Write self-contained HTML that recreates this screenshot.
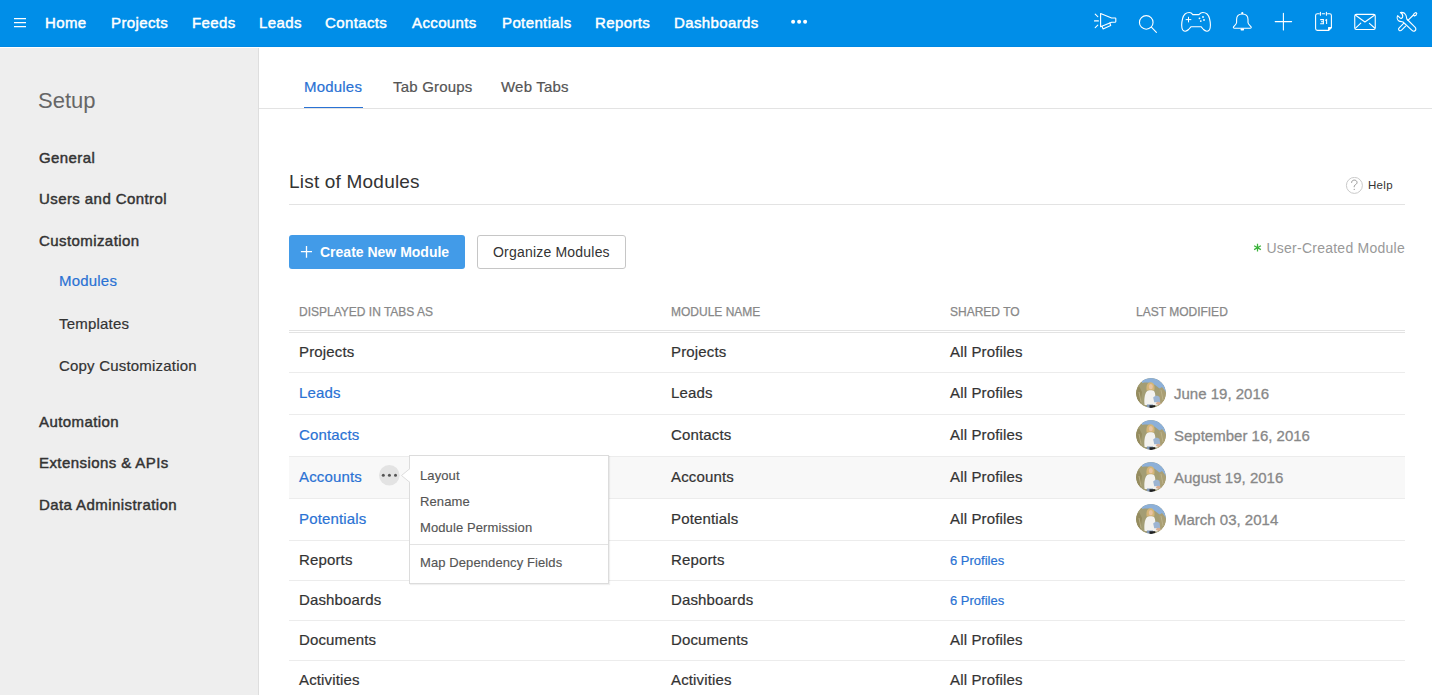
<!DOCTYPE html>
<html><head><meta charset="utf-8">
<style>
*{box-sizing:border-box;margin:0;padding:0}
html,body{width:1432px;height:695px;overflow:hidden;background:#fff;font-family:"Liberation Sans",sans-serif;color:#333}
.abs{position:absolute;white-space:nowrap}
#top{position:absolute;left:0;top:0;width:1432px;height:47px;background:#008ee8;border-bottom:1px solid #0088e3}
#top .n{position:absolute;top:14px;font-size:15px;color:#fff;line-height:17px;letter-spacing:0.38px;-webkit-text-stroke:0.45px #fff}
#side{position:absolute;left:0;top:48px;width:259px;height:647px;background:#eeeeee;border-right:1px solid #dedede}
#side .m{position:absolute;left:39px;font-size:15px;color:#333;line-height:17px;letter-spacing:0.42px;-webkit-text-stroke:0.45px #333}
#side .s{position:absolute;left:59px;font-size:15px;color:#333;line-height:17px;letter-spacing:0.2px;-webkit-text-stroke:0.2px currentColor}
#side .blue{color:#2a72d4}
#main{position:absolute;left:259px;top:47px;width:1173px;height:648px;background:#fff}
.tab{position:absolute;top:32px;font-size:15px;color:#555;line-height:17px;letter-spacing:0.2px;-webkit-text-stroke:0.2px currentColor}
.row{position:absolute;left:289px;width:1116px;border-bottom:1px solid #e6e6e6}
.c{position:absolute;font-size:15px;color:#333;line-height:17px;letter-spacing:0.15px;-webkit-text-stroke:0.2px currentColor}
.blue{color:#2a72d4}
.hd{position:absolute;top:305px;font-size:12px;color:#888;line-height:14px;-webkit-text-stroke:0.25px #888}
.av{position:absolute;width:30px;height:30px;border-radius:50%;overflow:hidden}
.dt{position:absolute;font-size:15px;color:#888;line-height:17px;-webkit-text-stroke:0.3px #888}
</style></head><body>
<div id="top">
  <svg class="abs" style="left:0;top:0" width="30" height="46"><path d="M14 18.6H26M14 22.6H26M14 26.6H26" stroke="#fff" stroke-width="1.2"/></svg>
  <div class="n" style="left:45px">Home</div>
  <div class="n" style="left:111px">Projects</div>
  <div class="n" style="left:192px">Feeds</div>
  <div class="n" style="left:259px">Leads</div>
  <div class="n" style="left:325px">Contacts</div>
  <div class="n" style="left:412px">Accounts</div>
  <div class="n" style="left:502px">Potentials</div>
  <div class="n" style="left:595px">Reports</div>
  <div class="n" style="left:674px">Dashboards</div>
  <svg class="abs" style="left:780px;top:0" width="40" height="46"><circle cx="13.1" cy="21.7" r="2" fill="#fff"/><circle cx="19.1" cy="21.7" r="2" fill="#fff"/><circle cx="25.1" cy="21.7" r="2" fill="#fff"/></svg>
  <svg class="abs" style="left:1080px;top:0" width="352" height="46" fill="none" stroke="#fff" stroke-width="1.1" stroke-linecap="round" stroke-linejoin="round">
    <path d="M15.2 14.2L17.8 16.6M14.5 20.9H18.4M15.2 27.6L17.8 25.2"/>
    <path d="M20.6 13.5L31.6 18H35.2Q35.8 18 35.8 18.6V21.6Q35.8 22.2 35.2 22.2H31.6L20.6 26.8Z"/>
    <path d="M22 26.2L23 28.9L30.7 25.4L29.8 23"/>
    <circle cx="66.25" cy="22.4" r="6.8"/>
    <path d="M71.4 27.2L76.4 32.4"/>
    <path d="M112.8 14.6H118.9C120 13.4 121 12.5 122.8 12.5C126 12.5 128.5 14.5 129.5 18.5C130.5 22.5 130.8 27 129.5 29.8C128.3 32 125.5 31.5 123.5 29.5L121 26.7H111.1L108.6 29.5C106.6 31.5 103.8 32 102.6 29.8C101.3 27 101.6 22.5 102.6 18.5C103.6 14.5 106.1 12.5 109.3 12.5C111.1 12.5 112 13.4 112.8 14.6Z"/>
    <path d="M108.5 17.2V22M106.1 19.6H110.9" stroke-width="1"/>
    <g fill="#fff" stroke="none"><circle cx="119.5" cy="18.3" r="0.9"/><circle cx="123" cy="17" r="0.9"/><circle cx="120.8" cy="21.1" r="0.9"/><circle cx="124" cy="20" r="0.9"/></g>
    <path d="M162.3 14C158.6 14 156.6 16.5 156.6 19.5V22.4C156.6 24 154.5 25.5 153.6 26.7C153 27.6 153.5 28.2 154.5 28.2H170.1C171.1 28.2 171.6 27.6 171 26.7C170.1 25.5 168 24 168 22.4V19.5C168 16.5 166 14 162.3 14Z"/>
    <g fill="#fff" stroke="none"><circle cx="162.3" cy="13.2" r="1.1"/><rect x="160.6" y="28.4" width="3.4" height="2" rx="0.6"/></g>
    <path d="M203.4 13.2V30M195.2 21.6H211.6"/>
    <path d="M239.2 13.8H237.4Q235.6 13.8 235.6 15.6V28.6Q235.6 30.4 237.4 30.4H248.6L251.4 27.4V15.6Q251.4 13.8 249.6 13.8H247.6M242.2 13.8H244.6M240.4 12.2V15.2M246.4 12.2V15.2"/>
    <path d="M248.6 30.4V27.6H251.4Z" fill="#fff"/>
    <path d="M240.2 19.6H243.4V23.8H240.2M241 21.7H243.4M245.2 20.4L246.6 19.6V24" stroke-width="1.05" stroke-linecap="butt" stroke-linejoin="miter"/>
    <rect x="274.75" y="14.4" width="20.5" height="15.1" rx="1.6"/>
    <path d="M275.6 15.3L284.9 22L294.4 15.3M275.6 28.2L280.8 23.1M289.4 23.3L294.6 28"/>
    <path d="M320.4 12.5C322 12.2 324.5 12.8 325.5 14.5C326.5 16 326.5 17.5 326.8 19L335.2 27.3C336.2 28.3 336 30 335 30.8C334 31.6 332.8 31.2 332 30.4L323 22C321.5 21.7 319.8 21.6 318.6 20.7C317.2 19.6 316.8 17.2 317.6 15.7L320.3 18.2C321 18.9 322.2 18.2 322.6 17C323 15.6 322.4 13.8 320.4 12.5Z"/>
    <path d="M323.6 23.4L319.2 27.8C318.4 28.6 318.4 29.6 319.1 30.3C319.8 31 320.8 31 321.6 30.2L325.6 26.1"/>
    <path d="M327.9 20.4L333.4 15"/>
    <path d="M333.4 15L334.2 13.4L336 12.6L336.8 13.4L336 15.2L334.4 16Z"/>
  </svg>
</div>

<div id="side">
  <div class="abs" style="left:38px;top:40px;font-size:22px;color:#666;line-height:25px">Setup</div>
  <div class="m" style="top:101px">General</div>
  <div class="m" style="top:142px">Users and Control</div>
  <div class="m" style="top:184px">Customization</div>
  <div class="s blue" style="top:224px">Modules</div>
  <div class="s" style="top:267px">Templates</div>
  <div class="s" style="top:309px">Copy Customization</div>
  <div class="m" style="top:365px">Automation</div>
  <div class="m" style="top:406px">Extensions &amp; APIs</div>
  <div class="m" style="top:448px">Data Administration</div>
</div>

<div id="main"></div>
<div class="tab blue" style="left:304px;top:78px">Modules</div>
<div class="abs" style="left:304px;top:107px;width:59px;height:2px;background:#2a72d4"></div>
<div class="tab" style="left:393px;top:78px">Tab Groups</div>
<div class="tab" style="left:501px;top:78px">Web Tabs</div>
<div class="abs" style="left:259px;top:108px;width:1173px;height:1px;background:#e3e3e3"></div>

<div class="abs" style="left:289px;top:171px;font-size:19px;color:#333;line-height:22px;letter-spacing:0.2px">List of Modules</div>
<svg class="abs" style="left:1345px;top:177px" width="19" height="18" viewBox="0 0 19 18"><circle cx="9.4" cy="8.4" r="8" fill="none" stroke="#c4c4c4" stroke-width="0.9"/><path d="M6.6 5.8C6.6 3.9 7.9 3.1 9.3 3.1C10.8 3.1 12 4 12 5.5C12 7 10.7 7.4 9.7 8.3C9.2 8.8 9.2 9.4 9.2 10.2" fill="none" stroke="#8a8a8a" stroke-width="0.9"/><circle cx="9.2" cy="12.3" r="0.6" fill="#8a8a8a"/></svg>
<div class="abs" style="left:1368px;top:179px;font-size:11.5px;color:#333;line-height:13px;letter-spacing:0.3px">Help</div>
<div class="abs" style="left:289px;top:204px;width:1116px;height:1px;background:#e3e3e3"></div>

<div class="abs" style="left:289px;top:235px;width:176px;height:34px;background:#429be8;border-radius:3px"></div>
<svg class="abs" style="left:300px;top:245px" width="13" height="13"><path d="M6.5 1V12.7M0.9 6.7H12" stroke="#fff" stroke-width="1.3"/></svg>
<div class="abs" style="left:320px;top:244px;font-size:14px;font-weight:bold;color:#fff;line-height:16px">Create New Module</div>
<div class="abs" style="left:477px;top:235px;width:149px;height:34px;background:#fff;border:1px solid #c6c6c6;border-radius:3px"></div>
<div class="abs" style="left:493px;top:244px;font-size:14px;color:#333;line-height:16px;letter-spacing:0.2px">Organize Modules</div>
<svg class="abs" style="left:1253px;top:243px" width="10" height="10"><path d="M4.5 0.8V8.6M1.1 2.8L7.9 6.6M1.1 6.6L7.9 2.8" stroke="#3db33d" stroke-width="1.25"/></svg>
<div class="abs" style="right:27px;top:240px;font-size:14px;color:#999;line-height:16px;letter-spacing:0.25px">User-Created Module</div>

<div class="hd" style="left:299px">DISPLAYED IN TABS AS</div>
<div class="hd" style="left:671px">MODULE NAME</div>
<div class="hd" style="left:950px">SHARED TO</div>
<div class="hd" style="left:1136px">LAST MODIFIED</div>
<div class="abs" style="left:289px;top:330px;width:1116px;height:1px;background:#e3e3e3"></div>
<div class="abs" style="left:289px;top:332px;width:1116px;height:1px;background:#e3e3e3"></div>

<div class="abs" style="left:289px;top:334px;width:1116px;height:39px;background:#fff;border-bottom:1px solid #ececec"></div>
<div class="c" style="left:299px;top:343px">Projects</div>
<div class="c" style="left:671px;top:343px">Projects</div>
<div class="c" style="left:950px;top:343px">All Profiles</div>
<div class="abs" style="left:289px;top:373px;width:1116px;height:42px;background:#fff;border-bottom:1px solid #ececec"></div>
<div class="c blue" style="left:299px;top:384px">Leads</div>
<div class="c" style="left:671px;top:384px">Leads</div>
<div class="c" style="left:950px;top:384px">All Profiles</div>
<div class="av" style="left:1136px;top:378px"><svg width="30" height="30" viewBox="0 0 30 30"><defs><clipPath id="cp"><circle cx="15" cy="15" r="15"/></clipPath><linearGradient id="sky" x1="0" y1="0" x2="1" y2="1"><stop offset="0" stop-color="#9fb3c0"/><stop offset="0.5" stop-color="#8eb0d6"/><stop offset="1" stop-color="#9aa79a"/></linearGradient></defs><g clip-path="url(#cp)"><rect width="30" height="30" fill="#a39d74"/><path d="M6 0H30V15C27 13 24 11 21 8.5C18 5.5 13 3.5 6 5Z" fill="#8db0d8"/><path d="M0 12L3 8L6 14L4 30H0Z" fill="#958c5f"/><path d="M23 11L26 9L30 14V30H24Z" fill="#aa9f74"/><path d="M25 12L27 22M3 14L5 24" stroke="#c0b68e" stroke-width="0.8"/><path d="M10.6 12.5C10 8 11 4.3 14.6 4.3C18.2 4.3 19 8 18.3 12.5Z" fill="#d4b577"/><ellipse cx="14.8" cy="8.7" rx="2" ry="2.6" fill="#e8c4a4"/><path d="M8.6 27C8 22 8.4 15.5 11 13.2C12.6 12 16.6 12 18.2 13.2C19.6 15 19.2 19 19.6 21L23.5 24L21.5 27.5Z" fill="#f3f2ef"/><path d="M17.2 19.5C19 17.2 22.2 17 23.6 19.2L24.2 24.2L18.2 24.2Z" fill="#9cb4d2"/><path d="M10.5 30L11 26.5H17V30Z" fill="#8299b8"/><ellipse cx="22.3" cy="25.2" rx="2.2" ry="1.5" fill="#d9ae92"/><path d="M13.5 27.3H19.2V30.5H13.5Z" fill="#222"/></g></svg></div>
<div class="dt" style="left:1174px;top:385px">June 19, 2016</div>
<div class="abs" style="left:289px;top:415px;width:1116px;height:42px;background:#fff;border-bottom:1px solid #ececec"></div>
<div class="c blue" style="left:299px;top:426px">Contacts</div>
<div class="c" style="left:671px;top:426px">Contacts</div>
<div class="c" style="left:950px;top:426px">All Profiles</div>
<div class="av" style="left:1136px;top:420px"><svg width="30" height="30" viewBox="0 0 30 30"><g clip-path="url(#cp)"><rect width="30" height="30" fill="#a39d74"/><path d="M6 0H30V15C27 13 24 11 21 8.5C18 5.5 13 3.5 6 5Z" fill="#8db0d8"/><path d="M0 12L3 8L6 14L4 30H0Z" fill="#958c5f"/><path d="M23 11L26 9L30 14V30H24Z" fill="#aa9f74"/><path d="M25 12L27 22M3 14L5 24" stroke="#c0b68e" stroke-width="0.8"/><path d="M10.6 12.5C10 8 11 4.3 14.6 4.3C18.2 4.3 19 8 18.3 12.5Z" fill="#d4b577"/><ellipse cx="14.8" cy="8.7" rx="2" ry="2.6" fill="#e8c4a4"/><path d="M8.6 27C8 22 8.4 15.5 11 13.2C12.6 12 16.6 12 18.2 13.2C19.6 15 19.2 19 19.6 21L23.5 24L21.5 27.5Z" fill="#f3f2ef"/><path d="M17.2 19.5C19 17.2 22.2 17 23.6 19.2L24.2 24.2L18.2 24.2Z" fill="#9cb4d2"/><path d="M10.5 30L11 26.5H17V30Z" fill="#8299b8"/><ellipse cx="22.3" cy="25.2" rx="2.2" ry="1.5" fill="#d9ae92"/><path d="M13.5 27.3H19.2V30.5H13.5Z" fill="#222"/></g></svg></div>
<div class="dt" style="left:1174px;top:427px">September 16, 2016</div>
<div class="abs" style="left:289px;top:457px;width:1116px;height:42px;background:#f8f8f8;border-bottom:1px solid #ececec"></div>
<div class="c blue" style="left:299px;top:468px">Accounts</div>
<div class="c" style="left:671px;top:468px">Accounts</div>
<div class="c" style="left:950px;top:468px">All Profiles</div>
<div class="av" style="left:1136px;top:462px"><svg width="30" height="30" viewBox="0 0 30 30"><g clip-path="url(#cp)"><rect width="30" height="30" fill="#a39d74"/><path d="M6 0H30V15C27 13 24 11 21 8.5C18 5.5 13 3.5 6 5Z" fill="#8db0d8"/><path d="M0 12L3 8L6 14L4 30H0Z" fill="#958c5f"/><path d="M23 11L26 9L30 14V30H24Z" fill="#aa9f74"/><path d="M25 12L27 22M3 14L5 24" stroke="#c0b68e" stroke-width="0.8"/><path d="M10.6 12.5C10 8 11 4.3 14.6 4.3C18.2 4.3 19 8 18.3 12.5Z" fill="#d4b577"/><ellipse cx="14.8" cy="8.7" rx="2" ry="2.6" fill="#e8c4a4"/><path d="M8.6 27C8 22 8.4 15.5 11 13.2C12.6 12 16.6 12 18.2 13.2C19.6 15 19.2 19 19.6 21L23.5 24L21.5 27.5Z" fill="#f3f2ef"/><path d="M17.2 19.5C19 17.2 22.2 17 23.6 19.2L24.2 24.2L18.2 24.2Z" fill="#9cb4d2"/><path d="M10.5 30L11 26.5H17V30Z" fill="#8299b8"/><ellipse cx="22.3" cy="25.2" rx="2.2" ry="1.5" fill="#d9ae92"/><path d="M13.5 27.3H19.2V30.5H13.5Z" fill="#222"/></g></svg></div>
<div class="dt" style="left:1174px;top:469px">August 19, 2016</div>
<div class="abs" style="left:289px;top:499px;width:1116px;height:42px;background:#fff;border-bottom:1px solid #ececec"></div>
<div class="c blue" style="left:299px;top:510px">Potentials</div>
<div class="c" style="left:671px;top:510px">Potentials</div>
<div class="c" style="left:950px;top:510px">All Profiles</div>
<div class="av" style="left:1136px;top:504px"><svg width="30" height="30" viewBox="0 0 30 30"><g clip-path="url(#cp)"><rect width="30" height="30" fill="#a39d74"/><path d="M6 0H30V15C27 13 24 11 21 8.5C18 5.5 13 3.5 6 5Z" fill="#8db0d8"/><path d="M0 12L3 8L6 14L4 30H0Z" fill="#958c5f"/><path d="M23 11L26 9L30 14V30H24Z" fill="#aa9f74"/><path d="M25 12L27 22M3 14L5 24" stroke="#c0b68e" stroke-width="0.8"/><path d="M10.6 12.5C10 8 11 4.3 14.6 4.3C18.2 4.3 19 8 18.3 12.5Z" fill="#d4b577"/><ellipse cx="14.8" cy="8.7" rx="2" ry="2.6" fill="#e8c4a4"/><path d="M8.6 27C8 22 8.4 15.5 11 13.2C12.6 12 16.6 12 18.2 13.2C19.6 15 19.2 19 19.6 21L23.5 24L21.5 27.5Z" fill="#f3f2ef"/><path d="M17.2 19.5C19 17.2 22.2 17 23.6 19.2L24.2 24.2L18.2 24.2Z" fill="#9cb4d2"/><path d="M10.5 30L11 26.5H17V30Z" fill="#8299b8"/><ellipse cx="22.3" cy="25.2" rx="2.2" ry="1.5" fill="#d9ae92"/><path d="M13.5 27.3H19.2V30.5H13.5Z" fill="#222"/></g></svg></div>
<div class="dt" style="left:1174px;top:511px">March 03, 2014</div>
<div class="abs" style="left:289px;top:541px;width:1116px;height:40px;background:#fff;border-bottom:1px solid #ececec"></div>
<div class="c" style="left:299px;top:551px">Reports</div>
<div class="c" style="left:671px;top:551px">Reports</div>
<div class="c blue" style="left:950px;top:552px;font-size:13px;letter-spacing:0">6 Profiles</div>
<div class="abs" style="left:289px;top:581px;width:1116px;height:40px;background:#fff;border-bottom:1px solid #ececec"></div>
<div class="c" style="left:299px;top:591px">Dashboards</div>
<div class="c" style="left:671px;top:591px">Dashboards</div>
<div class="c blue" style="left:950px;top:592px;font-size:13px;letter-spacing:0">6 Profiles</div>
<div class="abs" style="left:289px;top:621px;width:1116px;height:40px;background:#fff;border-bottom:1px solid #ececec"></div>
<div class="c" style="left:299px;top:631px">Documents</div>
<div class="c" style="left:671px;top:631px">Documents</div>
<div class="c" style="left:950px;top:631px">All Profiles</div>
<div class="abs" style="left:289px;top:661px;width:1116px;height:40px;background:#fff;border-bottom:1px solid #ececec"></div>
<div class="c" style="left:299px;top:671px">Activities</div>
<div class="c" style="left:671px;top:671px">Activities</div>
<div class="c" style="left:950px;top:671px">All Profiles</div>
<svg class="abs" style="left:378px;top:465px" width="22" height="22"><circle cx="11.3" cy="10.3" r="10.3" fill="#e3e3e3"/><circle cx="5.3" cy="10.3" r="1.5" fill="#555"/><circle cx="11.4" cy="10.3" r="1.5" fill="#555"/><circle cx="17.5" cy="10.3" r="1.5" fill="#555"/></svg>
<div class="abs" style="left:409px;top:455px;width:200px;height:129px;background:#fff;border:1px solid #dcdcdc;box-shadow:1px 1px 1px rgba(0,0,0,0.06)"></div>
<svg class="abs" style="left:400px;top:468px" width="11" height="15"><path d="M10 0.5L1.5 7.5L10 14.5" fill="#fff" stroke="#dcdcdc" stroke-width="1"/><rect x="10" y="0" width="2" height="15" fill="#fff"/></svg>
<div class="abs" style="left:420px;top:468px;font-size:13px;color:#555;line-height:15px;letter-spacing:0.1px;-webkit-text-stroke:0.15px #555">Layout</div>
<div class="abs" style="left:420px;top:494px;font-size:13px;color:#555;line-height:15px;letter-spacing:0.1px;-webkit-text-stroke:0.15px #555">Rename</div>
<div class="abs" style="left:420px;top:520px;font-size:13px;color:#555;line-height:15px;letter-spacing:0.1px;-webkit-text-stroke:0.15px #555">Module Permission</div>
<div class="abs" style="left:410px;top:544px;width:198px;height:1px;background:#e3e3e3"></div>
<div class="abs" style="left:420px;top:555px;font-size:13px;color:#555;line-height:15px;letter-spacing:0.1px;-webkit-text-stroke:0.15px #555">Map Dependency Fields</div>
</body></html>
